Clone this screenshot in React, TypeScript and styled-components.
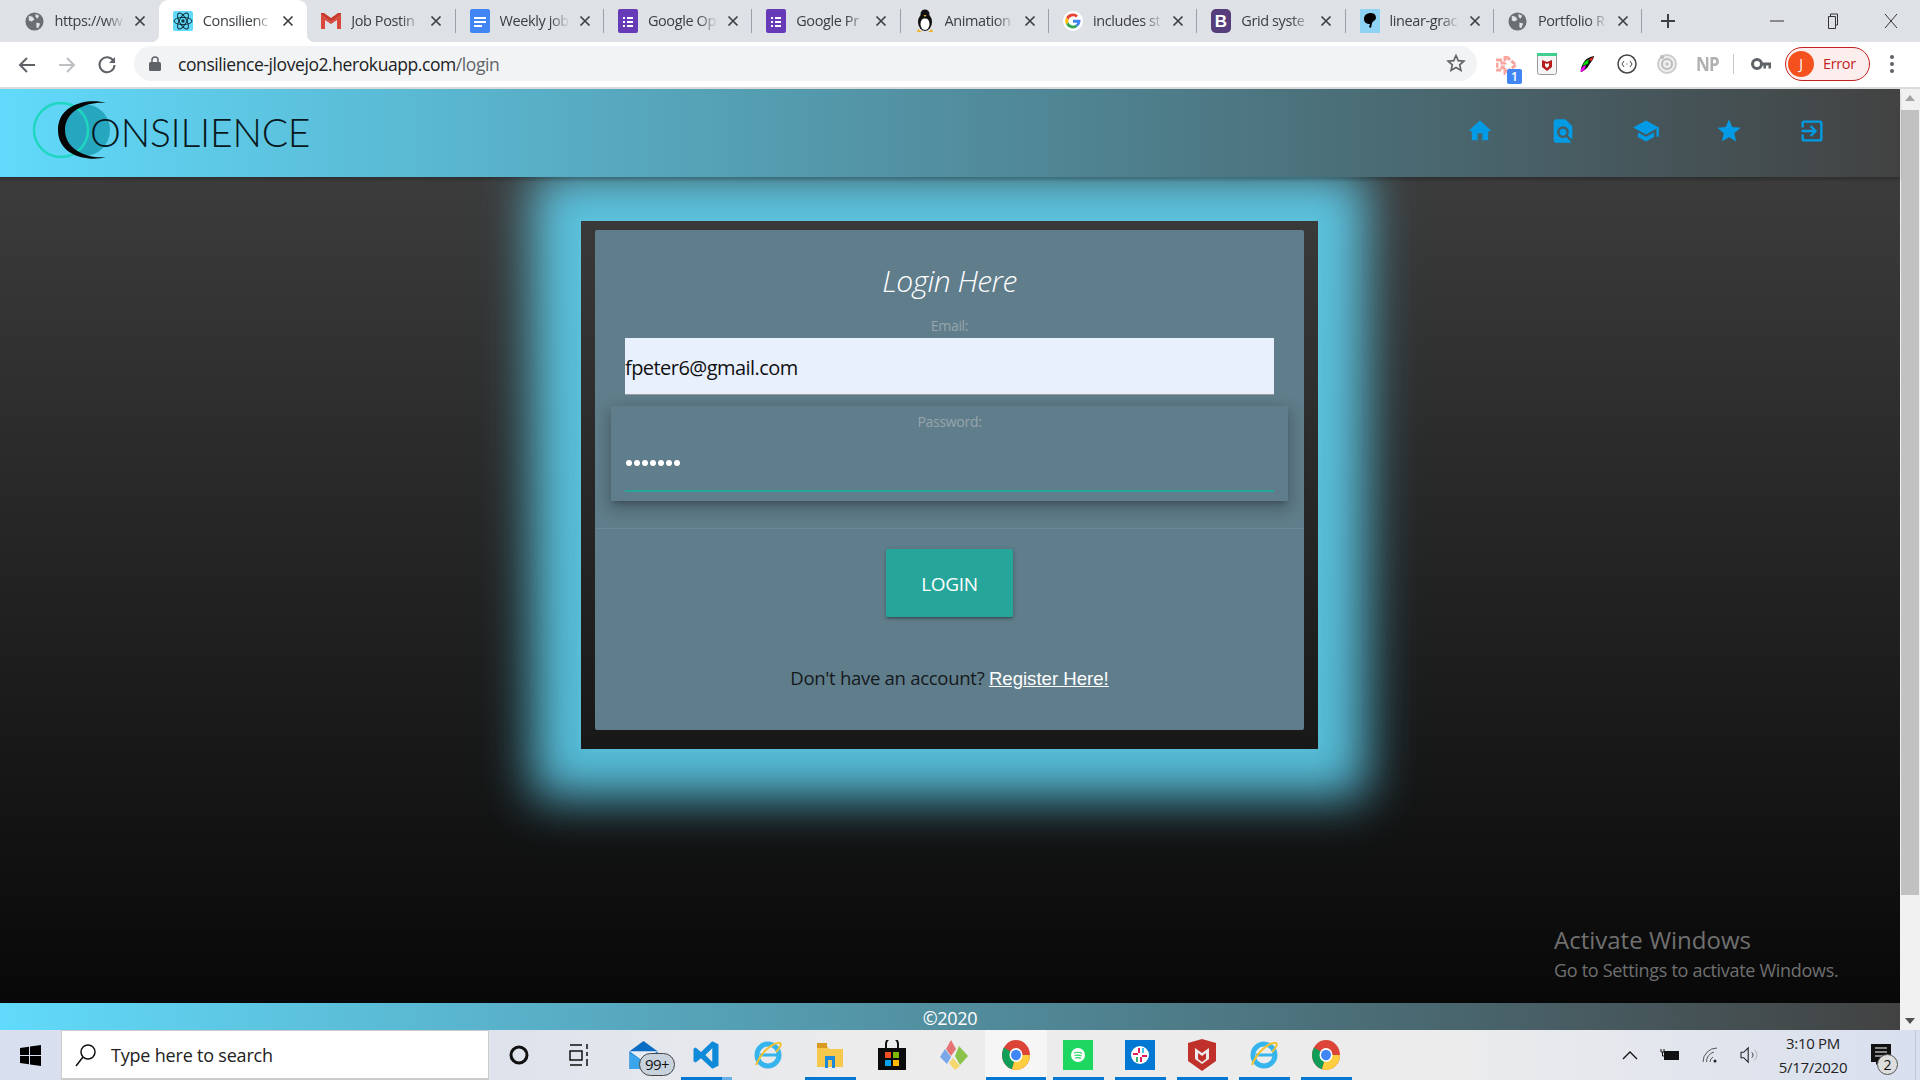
import React from "react";
import styled, { createGlobalStyle } from "styled-components";

const Global = createGlobalStyle`
  html, body { margin: 0; height: 1080px; overflow: hidden; }
  body { font-family: "Open Sans", "Noto Sans", sans-serif; }
  * { box-sizing: border-box; }
`;
const Shell = styled.div`display:flex;flex-direction:column;width:1920px;height:1080px;position:relative;overflow:hidden;`;
const TabStrip = styled.div`height:42px;flex:none;background:#dee1e6;display:flex;align-items:stretch;padding-left:10.5px;`;
const Tab = styled.div<{ $active?: boolean; $sep?: boolean }>`
  width:148.35px;flex:none;display:flex;align-items:center;padding-left:14px;position:relative;color:#3c4043;
  background:${p => (p.$active ? "#fff" : "transparent")};
  border-radius:${p => (p.$active ? "9px 9px 0 0" : "0")};
  &::after{
    content:"";position:absolute;
    ${p => p.$active
      ? "right:-8px;bottom:0;width:8px;height:8px;background:radial-gradient(circle at 100% 0,transparent 8px,#fff 8.5px);"
      : p.$sep ? "right:0;top:9px;bottom:9px;width:1px;background:#9aa0a6;" : ""}
  }
  &::before{
    content:"";position:absolute;
    ${p => p.$active ? "left:-8px;bottom:0;width:8px;height:8px;background:radial-gradient(circle at 0 0,transparent 8px,#fff 8.5px);" : ""}
  }
`;
const FavSlot = styled.span`width:20px;height:20px;flex:none;display:flex;align-items:center;justify-content:center;`;
const TabTitle = styled.span`width:70px;margin-left:10px;margin-top:-2px;font-size:14.5px;letter-spacing:-.4px;white-space:nowrap;
  -webkit-mask-image:linear-gradient(to right,#000 72%,transparent 100%);mask-image:linear-gradient(to right,#000 72%,transparent 100%);`;
const TabClose = styled.span`margin-left:9px;width:12px;height:12px;flex:none;display:flex;`;
const NewTab = styled.span`margin-left:18px;align-self:center;display:flex;`;
const WindowControls = styled.div`margin-left:auto;margin-right:-1px;display:flex;align-items:center;`;
const WinBtn = styled.span<{ $w: number }>`width:${p => p.$w}px;display:flex;justify-content:center;`;

const Toolbar = styled.div`height:47px;flex:none;background:#fff;border-bottom:2px solid #dadada;display:flex;align-items:center;padding-left:16px;`;
const NavBtn = styled.span`width:22px;margin-right:18px;display:flex;justify-content:center;`;
const Omnibox = styled.div`width:1343px;height:35px;margin-left:-2px;margin-top:-2px;border-radius:18px;background:#f1f3f4;display:flex;align-items:center;padding-left:15px;position:relative;`;
const Url = styled.span`margin-left:17px;font-size:17.5px;letter-spacing:-.42px;color:#202124;span{color:#5f6368;}`;
const StarSlot = styled.span`position:absolute;right:11px;top:7px;display:flex;`;
const ExtRow = styled.div`display:flex;align-items:center;margin-left:10px;margin-top:-2px;`;
const Ext = styled.span<{ $w?: number }>`width:${p => p.$w || 40}px;display:flex;justify-content:center;position:relative;`;
const Badge = styled.span`position:absolute;right:5px;bottom:-9px;width:15px;height:15px;background:#4285f4;border-radius:2px;color:#fff;font-size:12px;font-weight:600;line-height:15px;text-align:center;`;
const NpMark = styled.span`font-size:20px;line-height:22px;font-weight:700;color:#b0b0b0;letter-spacing:-1px;transform:scaleX(.85);`;
const ExtDivider = styled.span`width:1px;height:20px;background:#c8c8c8;margin:0 17px 0 6px;`;
const ErrorPill = styled.div`margin-left:12px;width:85px;height:34px;border:1.5px solid #c5221f;border-radius:17px;background:#fbeeec;display:flex;align-items:center;color:#c5221f;font-size:14.5px;letter-spacing:-.35px;`;
const Avatar = styled.span`width:26px;height:26px;margin-left:2px;margin-right:9px;border-radius:50%;background:#f4511e;color:#fff;font-size:14px;display:flex;align-items:center;justify-content:center;`;
const Kebab = styled.span`margin-left:20px;display:flex;flex-direction:column;gap:3px;i{width:4px;height:4px;border-radius:50%;background:#5f6368;display:block;}`;

const PageRow = styled.div`flex:1;display:flex;min-height:0;`;
const Page = styled.div`flex:1;display:flex;flex-direction:column;min-width:0;`;
const Header = styled.header`height:88px;flex:none;background:linear-gradient(to right,#61dafb,#424242);display:flex;align-items:center;justify-content:space-between;padding:0 74px 0 32px;box-shadow:0 3px 3px rgba(0,0,0,.2);position:relative;z-index:1;`;
const Brand = styled.div`display:flex;align-items:center;position:relative;height:88px;width:280px;`;
const LogoMark = styled.svg`margin-top:-6px;overflow:visible;`;
const Logotype = styled.span`position:absolute;left:58px;top:21px;font-family:"Lato",sans-serif;font-weight:300;font-size:39px;line-height:44px;letter-spacing:-.2px;color:#08171c;`;
const Nav = styled.nav`display:flex;gap:55px;margin-top:-4px;`;
const Main = styled.main`flex:1;display:flex;justify-content:center;align-items:flex-start;padding:44px 0 0 0;min-height:0;background:linear-gradient(to bottom,#3c3c3c,#080808);`;
const Card = styled.section`width:737px;height:528px;margin-left:-1px;padding:9px 14px 19px;box-shadow:0 0 46px 48px rgba(97,218,251,.85);`;
const Panel = styled.form`height:100%;background:#607d8b;border-radius:2px;display:flex;flex-direction:column;align-items:center;`;
const Title = styled.h2`margin:31px 0 0;height:42px;font-weight:300;font-style:italic;font-size:30px;line-height:40px;color:#fff;letter-spacing:-.55px;`;
const Label = styled.label`font-size:14px;line-height:18px;color:#97a5ab;letter-spacing:-.3px;`;
const EmailLabel = styled(Label)`margin-top:14px;height:21px;`;
const EmailInput = styled.div`width:649px;height:57px;padding-top:2px;background:#e8f0fe;border-bottom:1px solid #9e9e9e;color:#111;font-size:20px;letter-spacing:-.55px;display:flex;align-items:center;`;
const PasswordBox = styled.div`margin-top:11px;width:677px;height:95px;padding:7px 14px 0;background:#607d8b;display:flex;flex-direction:column;align-items:center;box-shadow:0 8px 17px 2px rgba(0,0,0,.14),0 3px 14px 2px rgba(0,0,0,.12),0 5px 5px -3px rgba(0,0,0,.2);position:relative;`;
const Dots = styled.div`width:100%;margin-top:24px;height:37px;border-bottom:2px solid #26a69a;display:flex;gap:2px;padding-top:5px;padding-left:1px;`;
const Dot = styled.i`width:6px;height:6px;border-radius:50%;background:#fff;display:block;`;
const Divider = styled.hr`width:100%;margin:27px 0 0;border:0;border-top:1px solid #6d8894;`;
const LoginButton = styled.button`margin-top:20px;width:127px;height:68px;padding-top:2px;border:0;border-radius:2px;background:#26a69a;color:#fff;font-family:inherit;font-size:19px;letter-spacing:-.3px;box-shadow:0 2px 2px 0 rgba(0,0,0,.14),0 3px 1px -2px rgba(0,0,0,.12),0 1px 5px 0 rgba(0,0,0,.2);`;
const Foot = styled.p`margin:48px 0 0;font-size:18.5px;line-height:26px;color:#14191c;letter-spacing:-.28px;`;
const RegisterLink = styled.a`font-family:"Liberation Sans",sans-serif;color:#fff;text-decoration:underline;letter-spacing:0;font-size:18.6px;`;
const Footer = styled.footer`height:27px;flex:none;background:linear-gradient(to right,#61dafb,#424242);color:#fff;text-align:center;font-size:18px;line-height:30px;letter-spacing:-.3px;`;
const Scrollbar = styled.div`width:20px;flex:none;background:#f1f1f1;display:flex;flex-direction:column;align-items:center;justify-content:space-between;padding:6px 1px;`;
const Thumb = styled.div`width:18px;height:785px;background:#c1c1c1;margin-top:9px;`;
const Arrow = styled.i<{ $down?: boolean }>`width:0;height:0;border-left:5px solid transparent;border-right:5px solid transparent;${p => p.$down ? "border-top:6px solid #505050;" : "border-bottom:6px solid #a3a3a3;"}`;
const Spacer = styled.div`flex:1;`;

const Taskbar = styled.div`height:50px;flex:none;background:linear-gradient(to right,#d8dfee 0%,#dde2ec 25%,#ececec 45%,#ececec 75%,#d8dfee 100%);display:flex;align-items:center;position:relative;`;
const StartBtn = styled.span`width:61px;display:flex;justify-content:center;`;
const SearchBox = styled.div`width:428px;height:50px;background:#fff;border:1px solid #ccc;border-bottom-width:2px;display:flex;align-items:center;padding-left:13px;font-size:18px;color:#222;letter-spacing:-.2px;gap:14px;`;
const TaskIcon = styled.span<{ $w?: number; $on?: boolean; $hi?: boolean; $split?: boolean }>`width:${p => p.$w || 62}px;height:50px;flex:none;display:flex;align-items:center;justify-content:center;position:relative;
  background:${p => p.$hi ? "#f6f6f6" : "transparent"};
  &::after{content:"";position:absolute;left:${p => p.$hi ? 1 : 6}px;right:${p => p.$hi ? 1 : 5}px;bottom:0;height:3px;
    background:${p => p.$split ? "linear-gradient(to right,#0078d4 80%,#6aaee6 80%)" : p.$on ? "#0078d4" : "transparent"};}`;
const MailCell = styled(TaskIcon)`padding-left:2px;`;
const MailBadge = styled.span`position:absolute;left:30px;top:23px;width:36px;height:23px;border-radius:12px;background:#c8d2dd;border:1px solid #444;font-size:15px;line-height:21px;text-align:center;color:#111;letter-spacing:-.5px;`;
const Tray = styled.div`margin-left:auto;display:flex;align-items:center;`;
const TrayIcon = styled.span`width:40px;display:flex;justify-content:center;`;
const Clock = styled.div`width:86px;text-align:center;font-size:15px;line-height:24px;color:#222;letter-spacing:-.3px;`;
const Notify = styled.span`width:50px;display:flex;justify-content:center;position:relative;`;
const NotifyCount = styled.span`position:absolute;right:8px;top:10px;width:21px;height:21px;border-radius:50%;background:#ddd;border:1px solid #555;color:#111;font-size:14px;line-height:19px;text-align:center;`;
const DesktopEdge = styled.span`width:5px;height:50px;margin-left:9px;border-left:1px solid #c4c8d0;`;
const Activation = styled.aside`position:absolute;left:1554px;top:922px;color:#707070;font-size:18px;line-height:24px;letter-spacing:-.3px;`;
const ActivationTitle = styled.div`font-size:24px;line-height:36px;letter-spacing:0;`;

const Close = () => <svg width="12" height="12" viewBox="0 0 12 12"><path d="M1.5 1.5l9 9M10.5 1.5l-9 9" stroke="#3c4043" strokeWidth="1.7"/></svg>;
const Globe = () => <svg width="19" height="19" viewBox="0 0 20 20"><circle cx="10" cy="10" r="9.5" fill="#6b6f73"/><path d="M4 4l4 1 2 3-3 2-3-1zM12 11l4 1-2 5-2-1zM11 2l4 2-2 3-2-2z" fill="#dee1e6"/></svg>;
const Sheet = ({ c }: { c: string }) => <svg width="20" height="24" viewBox="0 0 20 24"><rect width="20" height="24" rx="2" fill={c}/><path d="M5 8h2v2H5zM9 8h6v2H9zM5 12h2v2H5zM9 12h6v2H9zM5 16h2v2H5zM9 16h6v2H9z" fill="#fff"/></svg>;

const favs: Record<string, React.ReactNode> = {
  globe: <Globe />,
  react: <svg width="20" height="20" viewBox="0 0 20 20"><rect width="20" height="20" rx="2" fill="#61dafb"/><g fill="none" stroke="#10303a" strokeWidth="1"><ellipse cx="10" cy="10" rx="9" ry="3.6"/><ellipse cx="10" cy="10" rx="9" ry="3.6" transform="rotate(60 10 10)"/><ellipse cx="10" cy="10" rx="9" ry="3.6" transform="rotate(120 10 10)"/></g><circle cx="10" cy="10" r="1.7" fill="#10303a"/></svg>,
  gmail: <svg width="20" height="16" viewBox="0 0 20 16"><path d="M0 2l10 7 10-7v14h-4V7l-6 4-6-4v9H0z" fill="#d9483b"/><path d="M0 0h3l7 5 7-5h3v2l-10 7L0 2z" fill="#c9392e"/></svg>,
  docs: <svg width="20" height="24" viewBox="0 0 20 24"><rect width="20" height="24" rx="2" fill="#4285f4"/><path d="M4 8h12v2H4zM4 12h12v2H4zM4 16h8v2H4z" fill="#fff"/></svg>,
  forms: <Sheet c="#673ab7" />,
  tux: <svg width="18" height="24" viewBox="0 0 18 24"><ellipse cx="9" cy="13" rx="7" ry="9" fill="#111"/><ellipse cx="9" cy="15" rx="4.5" ry="6" fill="#fff"/><circle cx="9" cy="5" r="4.5" fill="#111"/><path d="M2 20l4 3H1zM16 20l-4 3h5zM7.5 6h3L9 8z" fill="#f0b429"/></svg>,
  google: <svg width="20" height="20" viewBox="2 2 16 16"><circle cx="10" cy="10" r="8" fill="#fff"/><path d="M10 4a6 6 0 0 1 4 1.500l-1.600 1.700A3.700 3.700 0 0 0 6.400 9L4.600 7A6 6 0 0 1 10 4z" fill="#ea4335"/><path d="M4.600 7L6.400 9a3.700 3.700 0 0 0 0 2.200l-1.900 1.500a6 6 0 0 1 .1-5.700z" fill="#fbbc05"/><path d="M4.500 12.700l1.900-1.500A3.700 3.700 0 0 0 12 13l1.800 1.400A6 6 0 0 1 4.500 12.700z" fill="#34a853"/><path d="M16 9h-6v2.300h3.400A3 3 0 0 1 12 13l1.800 1.400C15.200 13.200 16.300 11.200 16 9z" fill="#4285f4"/></svg>,
  boot: <svg width="20" height="24" viewBox="0 0 20 24"><rect width="20" height="24" rx="5" fill="#563d7c"/><text x="10" y="18" textAnchor="middle" fontFamily="Liberation Sans" fontWeight="700" fontSize="17" fill="#fff">B</text></svg>,
  css: <svg width="20" height="24" viewBox="0 0 20 24"><rect width="20" height="24" fill="#8fd3f4"/><path d="M4 10c0-4 3-6 7-6s5 3 5 5-3 3-4 5l-1 5-2-1 1-3c-3 0-6-1-6-5z" fill="#000"/></svg>,
};

const tabs = [
  ["globe", "https://ww"], ["react", "Consilienc"], ["gmail", "Job Postin"], ["docs", "Weekly job"],
  ["forms", "Google Op"], ["forms", "Google Pr"], ["tux", "Animation"], ["google", "includes st"],
  ["boot", "Grid syste"], ["css", "linear-grac"], ["globe", "Portfolio R"],
];

const Icon = ({ d, size = 28, c = "#039be5" }: { d: string; size?: number; c?: string }) => <svg width={size} height={size} viewBox="0 0 24 24"><path d={d} fill={c}/></svg>;
const navIcons = [
  "M10 20v-6h4v6h5v-8h3L12 3 2 12h3v8z",
  "M20 19.59V8l-6-6H6c-1.1 0-1.99.9-1.99 2L4 20c0 1.1.89 2 1.99 2H18c.45 0 .85-.15 1.19-.4l-4.43-4.43c-.8.52-1.74.83-2.76.83-2.76 0-5-2.24-5-5s2.24-5 5-5 5 2.24 5 5c0 1.02-.31 1.96-.83 2.75L20 19.59zM9 13c0 1.66 1.34 3 3 3s3-1.34 3-3-1.34-3-3-3-3 1.34-3 3z",
  "M5 13.18v4L12 21l7-3.82v-4L12 17l-7-3.82zM12 3L1 9l11 6 9-4.91V17h2V9L12 3z",
  "M12 17.27L18.18 21l-1.64-7.03L22 9.24l-7.19-.61L12 2 9.19 8.63 2 9.24l5.46 4.73L5.82 21z",
  "M10.09 15.59L11.5 17l5-5-5-5-1.41 1.41L12.67 11H3v2h9.67l-2.58 2.59zM19 3H5c-1.11 0-2 .9-2 2v4h2V5h14v14H5v-4H3v4c0 1.1.89 2 2 2h14c1.1 0 2-.9 2-2V5c0-1.1-.9-2-2-2z",
];

const Chrome = () => <svg width="28" height="30" viewBox="0 0 28 28" preserveAspectRatio="none"><circle cx="14" cy="14" r="14" fill="#db4437"/><path d="M14 14L2 7a14 14 0 0 0 8 20.400z" fill="#0f9d58"/><path d="M14 14h14a14 14 0 0 1-18 13.400z" fill="#ffcd40"/><circle cx="14" cy="14" r="6.500" fill="#fff"/><circle cx="14" cy="14" r="5" fill="#4285f4"/></svg>;
const Ie = () => <svg width="30" height="30" viewBox="0 0 30 30"><circle cx="15" cy="15" r="11" fill="none" stroke="#35b4ee" strokeWidth="5"/><path d="M7 15h17" stroke="#35b4ee" strokeWidth="3"/><path d="M3 25C8 12 20 2 27 3c2 2-1 6-4 9" fill="none" stroke="#f2c230" strokeWidth="2"/></svg>;

export default function App() {
  return (
    <Shell>
      <Global />
      <TabStrip>
        {tabs.map(([f, t], i) => (
          <Tab key={i} $active={i === 1} $sep={i >= 2}>
            <FavSlot>{favs[f]}</FavSlot>
            <TabTitle>{t}</TabTitle>
            <TabClose><Close /></TabClose>
          </Tab>
        ))}
        <NewTab><svg width="16" height="16" viewBox="0 0 16 16"><path d="M8 1v14M1 8h14" stroke="#3c4043" strokeWidth="2"/></svg></NewTab>
        <WindowControls>
          <WinBtn $w={56}><svg width="14" height="12"><path d="M0 6h14" stroke="#333" strokeWidth="1"/></svg></WinBtn>
          <WinBtn $w={56}><svg width="14" height="16"><path d="M4.500 3.500V1h7v11h-2M2.500 3.500h7v12h-7z" fill="none" stroke="#333"/></svg></WinBtn>
          <WinBtn $w={60}><svg width="14" height="16"><path d="M1 1l12 14M13 1L1 15" stroke="#333"/></svg></WinBtn>
        </WindowControls>
      </TabStrip>
      <Toolbar>
        <NavBtn><svg width="20" height="20" viewBox="0 0 20 20"><path d="M18 10H3M10 3l-7 7 7 7" fill="none" stroke="#5f6368" strokeWidth="2"/></svg></NavBtn>
        <NavBtn><svg width="20" height="20" viewBox="0 0 20 20"><path d="M2 10h15M10 3l7 7-7 7" fill="none" stroke="#bdc1c6" strokeWidth="2"/></svg></NavBtn>
        <NavBtn><svg width="20" height="20" viewBox="0 0 20 20"><path d="M16.500 6A7.500 7.500 0 1 0 17.500 10" fill="none" stroke="#5f6368" strokeWidth="2"/><path d="M18 2v6h-6z" fill="#5f6368"/></svg></NavBtn>
        <Omnibox>
          <svg width="12" height="15" viewBox="0 0 12 15"><rect y="6" width="12" height="9" rx="1.500" fill="#5f6368"/><path d="M3 6V4a3 3 0 0 1 6 0v2" fill="none" stroke="#5f6368" strokeWidth="1.500"/></svg>
          <Url>consilience-jlovejo2.herokuapp.com<span>/login</span></Url>
          <StarSlot><svg width="20" height="20" viewBox="0 0 24 24"><path d="M12 3l2.700 6.200 6.800.6-5.100 4.500 1.500 6.600L12 17.400 6.100 20.900l1.500-6.600L2.500 9.800l6.800-.6z" fill="none" stroke="#5f6368" strokeWidth="2"/></svg></StarSlot>
        </Omnibox>
        <ExtRow>
          <Ext><svg width="22" height="22" viewBox="0 0 22 22"><path d="M1 7h5v3h3V3l3 2 8 7-8 6-3 2v-6H6v3H1z" fill="none" stroke="#f9a6a0" strokeWidth="3" strokeDasharray="5 1.500"/></svg><Badge>1</Badge></Ext>
          <Ext><svg width="20" height="22" viewBox="0 0 20 22"><rect x=".5" y=".5" width="19" height="21" rx="2" fill="#f5f5f5" stroke="#999"/><rect width="20" height="3" fill="#3ecf8e"/><path d="M5 7l5 2 5-2v7l-5 4-5-4z" fill="#b71c1c"/><path d="M8 10l2 1 2-1v3l-2 2-2-2z" fill="#f5f5f5"/></svg></Ext>
          <Ext><svg width="18" height="20" viewBox="0 0 20 22"><path d="M3 20C3 12 8 3 18 2c-1 4-3 6-5 9-2 4-6 8-10 9z" fill="#111"/><path d="M3 20c0-5 3-7 6-8l-2 6z" fill="#f0f"/><path d="M5 13c1-3 3-5 7-7l-1 5z" fill="#0d0"/><path d="M12 6l5-3-2 5z" fill="#e22"/></svg></Ext>
          <Ext><svg width="20" height="20" viewBox="0 0 20 20"><circle cx="10" cy="10" r="9" fill="#fff" stroke="#444" strokeWidth="1.500"/><path d="M7 7l-2 3 2 3M13 7l2 3-2 3M9 10h.5M10.500 10h.5" fill="none" stroke="#444"/></svg></Ext>
          <Ext><svg width="20" height="22" viewBox="0 0 20 22"><circle cx="10" cy="11" r="9" fill="#eee" stroke="#ccc" strokeWidth="2"/><circle cx="10" cy="11" r="5" fill="none" stroke="#bbb" strokeWidth="2"/><circle cx="10" cy="11" r="1.500" fill="#bbb"/><circle cx="5" cy="4" r="2" fill="#bbb"/></svg></Ext>
          <Ext><NpMark>NP</NpMark></Ext>
          <ExtDivider />
          <Ext $w={22}><svg width="22" height="14" viewBox="0 0 22 14"><circle cx="6" cy="7" r="4.500" fill="none" stroke="#5f6368" strokeWidth="3"/><path d="M10 5.500h10v6h-2.500V8.500H15v3h-2.500v-3H10z" fill="#5f6368"/></svg></Ext>
          <ErrorPill><Avatar>J</Avatar>Error</ErrorPill>
          <Kebab><i /><i /><i /></Kebab>
        </ExtRow>
      </Toolbar>
      <PageRow>
        <Page>
          <Header>
            <Brand>
              <LogoMark width="92" height="62" viewBox="0 0 92 62">
                <circle cx="52" cy="31" r="26" fill="#27a6bf"/>
                <circle cx="29" cy="31" r="27" fill="none" stroke="#1fd6c0" strokeWidth="2.500"/>
                <path d="M74 4C58-1 26 4 26 31s32 32 48 27C58 60 33 52 33 31S58 2 74 4z" fill="#050505"/>
              </LogoMark>
              <Logotype>ONSILIENCE</Logotype>
            </Brand>
            <Nav>{navIcons.map((d, i) => <Icon key={i} d={d} />)}</Nav>
          </Header>
          <Main>
            <Card>
              <Panel>
                <Title>Login Here</Title>
                <EmailLabel>Email:</EmailLabel>
                <EmailInput>fpeter6@gmail.com</EmailInput>
                <PasswordBox>
                  <Label>Password:</Label>
                  <Dots>{Array.from({ length: 7 }, (_, i) => <Dot key={i} />)}</Dots>
                </PasswordBox>
                <Divider />
                <LoginButton type="button">LOGIN</LoginButton>
                <Foot>Don't have an account? <RegisterLink href="#">Register Here!</RegisterLink></Foot>
              </Panel>
            </Card>
          </Main>
          <Footer>©2020</Footer>
        </Page>
        <Scrollbar><Arrow /><Thumb /><Spacer /><Arrow $down /></Scrollbar>
      </PageRow>
      <Taskbar>
        <StartBtn><svg width="21" height="21" viewBox="0 0 21 21"><path d="M0 3l9-1.300V10H0zM10 1.500L21 0v10H10zM0 11h9v8.300L0 18zM10 11h11v10l-11-1.500z" fill="#000"/></svg></StartBtn>
        <SearchBox><svg width="22" height="24" viewBox="0 0 22 24"><circle cx="13" cy="9" r="7" fill="none" stroke="#111" strokeWidth="1.500"/><path d="M8 14l-7 9" stroke="#111" strokeWidth="1.500"/></svg>Type here to search</SearchBox>
        <TaskIcon $w={60}><svg width="20" height="20"><circle cx="10" cy="10" r="8" fill="none" stroke="#111" strokeWidth="3"/></svg></TaskIcon>
        <TaskIcon $w={60}><svg width="20" height="24" viewBox="0 0 20 24"><path d="M1 2h12M1 8h12v9H1zM1 22h12M18 1v5M18 9v4M18 16v7" fill="none" stroke="#111" strokeWidth="1.500"/></svg></TaskIcon>
        <MailCell $w={66}><svg width="29" height="28" viewBox="0 0 30 30"><path d="M0 11L15 0l15 11v19H0z" fill="#0a6cc2"/><path d="M0 11h30L15 22z" fill="#e8eef5"/><path d="M0 12l15 10 15-10v18H0z" fill="#3aa5ec"/></svg><MailBadge>99+</MailBadge></MailCell>
        <TaskIcon $split><svg width="30" height="30" viewBox="0 0 24 24"><path d="M17 1l5 2.400v17.200L17 23 8 14.500 3.700 18 2 17V7l1.700-1L8 9.500zM17 6.500L11.500 12l5.500 5.500z" fill="#0f8ad8"/></svg></TaskIcon>
        <TaskIcon><Ie /></TaskIcon>
        <TaskIcon $on><svg width="28" height="28" viewBox="0 0 28 28"><path d="M1 5h10l2 3h14v18H1z" fill="#f6c84c"/><path d="M9 27V15h10v12h-3v-8h-4v8z" fill="#1f88d8"/><rect x="1" y="2" width="10" height="5" fill="#d79a1e"/></svg></TaskIcon>
        <TaskIcon><svg width="28" height="30" viewBox="0 0 28 30"><rect y="8" width="28" height="22" fill="#0b0b0b"/><path d="M8 9V4a6 6 0 0 1 12 0v5" fill="none" stroke="#111" strokeWidth="2"/><rect x="7" y="12" width="6" height="6" fill="#f25022"/><rect x="15" y="12" width="6" height="6" fill="#7fba00"/><rect x="7" y="20" width="6" height="6" fill="#00a4ef"/><rect x="15" y="20" width="6" height="6" fill="#ffb900"/></svg></TaskIcon>
        <TaskIcon><svg width="30" height="30" viewBox="0 0 28 30"><path d="M11 0l5 9-5 7-5-7z" fill="#e57373"/><path d="M5 9l6 8-4 7-7-7z" fill="#7aa7e8"/><path d="M19 6l9 10-8 9-5-9z" fill="#8bc34a"/><path d="M13 18l7 8-5 4-6-7z" fill="#f5d76e"/></svg></TaskIcon>
        <TaskIcon $on $hi><Chrome /></TaskIcon>
        <TaskIcon $on><svg width="30" height="30" viewBox="0 0 30 30"><rect width="30" height="30" fill="#1ed760"/><circle cx="15" cy="15" r="7" fill="#fff"/><path d="M11 13c3-1 6-1 8 .5M11.500 15.500c2.500-.7 5-.5 7 .5M12 18c2-.5 4-.4 6 .5" fill="none" stroke="#1ed760" strokeWidth="1.200"/></svg></TaskIcon>
        <TaskIcon $on><svg width="30" height="30" viewBox="0 0 30 30"><rect width="30" height="30" fill="#0078d4"/><circle cx="15" cy="15" r="9" fill="#fff"/><path d="M13 8h2v5h-2zM17 17h-2v5h2zM8 13h5v2H8zM22 17h-5v-2h5z" fill="#e01e5a"/><path d="M17 8h2v5h-2z" fill="#36c5f0"/><path d="M11 17h2v5h-2z" fill="#2eb67d"/></svg></TaskIcon>
        <TaskIcon $on><svg width="28" height="32" viewBox="0 0 28 32"><path d="M0 4l14-4 14 4v18l-14 10L0 22z" fill="#c0312b"/><path d="M7 9l7 5 7-5v11l-7 5-7-5z" fill="#ececec"/><path d="M10 14l4 3 4-3v6l-4 3-4-3z" fill="#c0312b"/></svg></TaskIcon>
        <TaskIcon $on><Ie /></TaskIcon>
        <TaskIcon $on><Chrome /></TaskIcon>
        <Tray>
          <TrayIcon><svg width="16" height="10"><path d="M1 9l7-7 7 7" fill="none" stroke="#111" strokeWidth="1.300"/></svg></TrayIcon>
          <TrayIcon><svg width="20" height="14" viewBox="0 0 20 14"><rect x="4" y="3" width="15" height="9" fill="#111"/><path d="M1 1v3h3V1M2.500 4v4h2" fill="none" stroke="#111"/></svg></TrayIcon>
          <TrayIcon><svg width="16" height="16" viewBox="0 0 16 16"><path d="M1 15A14 14 0 0 1 15 1M4.500 15A10 10 0 0 1 12 5M8 15a6 6 0 0 1 3-5" fill="none" stroke="#555" strokeWidth="1"/><circle cx="13" cy="14" r="1.500" fill="#222"/></svg></TrayIcon>
          <TrayIcon><svg width="20" height="18" viewBox="0 0 22 20"><path d="M1 7h3l5-5v16l-5-5H1z" fill="none" stroke="#222" strokeWidth="1.200"/><path d="M13 7a4 4 0 0 1 0 6" fill="none" stroke="#222"/><path d="M16 4a8 8 0 0 1 0 12" fill="none" stroke="#aaa"/></svg></TrayIcon>
          <Clock>3:10 PM<br />5/17/2020</Clock>
          <Notify><svg width="20" height="22" viewBox="0 0 20 22"><path d="M0 0h20v18H8l-3 3v-3H0z" fill="#111"/><path d="M4 4h12M4 8h12M4 12h12" stroke="#fff"/></svg><NotifyCount>2</NotifyCount></Notify>
          <DesktopEdge />
        </Tray>
      </Taskbar>
      <Activation>
        <ActivationTitle>Activate Windows</ActivationTitle>
        Go to Settings to activate Windows.
      </Activation>
    </Shell>
  );
}
